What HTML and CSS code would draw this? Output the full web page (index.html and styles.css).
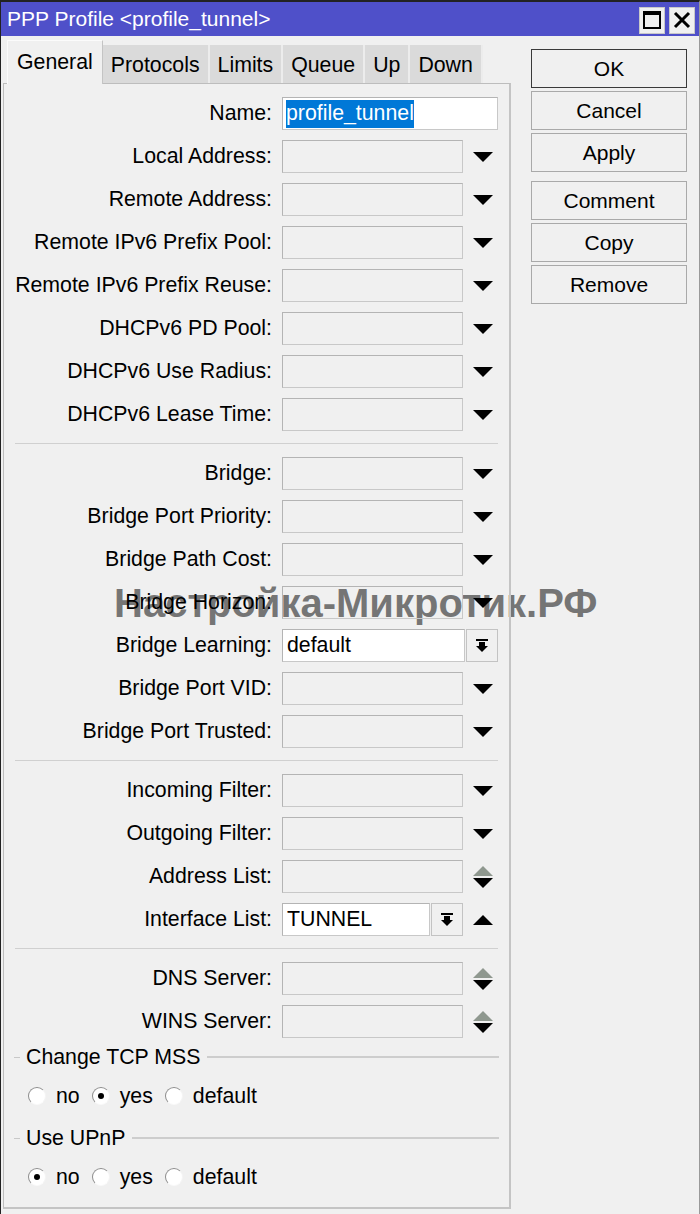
FILE: index.html
```html
<!DOCTYPE html>
<html lang="en">
<head>
  <meta charset="UTF-8">
  <title>PPP Profile &lt;profile_tunnel&gt;</title>
  <link rel="stylesheet" href="styles.css">
</head>
<body>
  <div class="window">
    <div class="titlebar">
      <span class="title">PPP Profile &lt;profile_tunnel&gt;</span>
      <div class="title-btns">
        <span class="tbtn"><svg width="20" height="20" viewBox="0 0 20 20"><rect x="2" y="2" width="16" height="16" fill="none" stroke="#000" stroke-width="2"/><rect x="2" y="2" width="16" height="3" fill="#000"/></svg></span>
        <span class="tbtn"><svg width="20" height="20" viewBox="0 0 20 20"><path d="M3 3 L17 17 M17 3 L3 17" stroke="#000" stroke-width="3"/></svg></span>
      </div>
    </div>

    <div class="body">
      <div class="left">
        <div class="tabs">
          <div class="tab active">General</div>
          <div class="tab">Protocols</div>
          <div class="tab">Limits</div>
          <div class="tab">Queue</div>
          <div class="tab">Up</div>
          <div class="tab">Down</div>
        </div>

        <div class="panel">
          <div class="grid">
            <label>Name:</label>
            <div class="field wide white"><span class="sel">profile_tunnel</span></div>

            <label>Local Address:</label>
            <div class="field"></div>
            <span class="arrow down"></span>

            <label>Remote Address:</label>
            <div class="field"></div>
            <span class="arrow down"></span>

            <label>Remote IPv6 Prefix Pool:</label>
            <div class="field"></div>
            <span class="arrow down"></span>

            <label>Remote IPv6 Prefix Reuse:</label>
            <div class="field"></div>
            <span class="arrow down"></span>

            <label>DHCPv6 PD Pool:</label>
            <div class="field"></div>
            <span class="arrow down"></span>

            <label>DHCPv6 Use Radius:</label>
            <div class="field"></div>
            <span class="arrow down"></span>

            <label>DHCPv6 Lease Time:</label>
            <div class="field"></div>
            <span class="arrow down"></span>
          </div>

          <div class="sep"></div>

          <div class="grid">
            <label>Bridge:</label>
            <div class="field"></div>
            <span class="arrow down"></span>

            <label>Bridge Port Priority:</label>
            <div class="field"></div>
            <span class="arrow down"></span>

            <label>Bridge Path Cost:</label>
            <div class="field"></div>
            <span class="arrow down"></span>

            <label>Bridge Horizon:</label>
            <div class="field"></div>
            <span class="arrow down"></span>

            <label>Bridge Learning:</label>
            <div class="combo wide">
              <div class="field white">default</div>
              <span class="drop"><span class="drop-icon"></span></span>
            </div>

            <label>Bridge Port VID:</label>
            <div class="field"></div>
            <span class="arrow down"></span>

            <label>Bridge Port Trusted:</label>
            <div class="field"></div>
            <span class="arrow down"></span>
          </div>

          <div class="sep"></div>

          <div class="grid">
            <label>Incoming Filter:</label>
            <div class="field"></div>
            <span class="arrow down"></span>

            <label>Outgoing Filter:</label>
            <div class="field"></div>
            <span class="arrow down"></span>

            <label>Address List:</label>
            <div class="field"></div>
            <span class="arrow updown"></span>

            <label>Interface List:</label>
            <div class="combo">
              <div class="field white">TUNNEL</div>
              <span class="drop"><span class="drop-icon"></span></span>
            </div>
            <span class="arrow up"></span>
          </div>

          <div class="sep"></div>

          <div class="grid">
            <label>DNS Server:</label>
            <div class="field"></div>
            <span class="arrow updown"></span>

            <label>WINS Server:</label>
            <div class="field"></div>
            <span class="arrow updown"></span>
          </div>

          <div class="group">
            <span class="group-lead"></span>
            <span class="group-title">Change TCP MSS</span>
            <span class="group-line"></span>
          </div>
          <div class="radios">
            <span class="radio"></span><span class="rlabel">no</span>
            <span class="radio checked"></span><span class="rlabel">yes</span>
            <span class="radio"></span><span class="rlabel">default</span>
          </div>

          <div class="group">
            <span class="group-lead"></span>
            <span class="group-title">Use UPnP</span>
            <span class="group-line"></span>
          </div>
          <div class="radios">
            <span class="radio checked"></span><span class="rlabel">no</span>
            <span class="radio"></span><span class="rlabel">yes</span>
            <span class="radio"></span><span class="rlabel">default</span>
          </div>
        </div>
      </div>

      <div class="actions">
        <button class="default">OK</button>
        <button>Cancel</button>
        <button>Apply</button>
        <button class="spaced">Comment</button>
        <button>Copy</button>
        <button>Remove</button>
      </div>
    </div>

    <div class="watermark">Настройка-Микротик.РФ</div>
  </div>
</body>
</html>
```

FILE: styles.css
```css
body {
  margin: 0;
  font-family: "Liberation Sans", Arial, sans-serif;
  font-size: 21.3px;
  color: #000;
  background: #f0f0f0;
}
.window {
  position: relative;
  width: 700px;
  height: 1214px;
  box-sizing: border-box;
  border-top: 2px solid #222;
  border-left: 1px solid #222;
  border-right: 1px solid #9a9a9a;
  background: #f0f0f0;
  overflow: hidden;
}
.titlebar {
  height: 34px;
  background: #4f50c9;
  display: flex;
  align-items: center;
  justify-content: space-between;
  padding: 0 4px 0 6px;
}
.title {
  color: #fff;
  font-size: 21px;
}
.title-btns {
  display: flex;
  gap: 4px;
  align-items: center;
  margin-top: 2px;
}
.tbtn {
  width: 26px;
  height: 27px;
  box-sizing: border-box;
  background: #f0f0f0;
  border: 1px solid #c8c8c8;
  display: flex;
  align-items: center;
  justify-content: center;
}
.body {
  display: flex;
}
.left {
  margin-left: 2px;
  width: 508px;
}
.tabs {
  display: flex;
  align-items: flex-end;
  height: 47px;
  padding-left: 4px;
}
.tab {
  height: 38px;
  box-sizing: border-box;
  padding: 7px 8px 0;
  background: #dadada;
  border-right: 2px solid #ececec;
  line-height: 26px;
}
.tab.active {
  height: 44px;
  padding: 8px 9px 0;
  background: #f0f0f0;
  border: 1px solid #c4c4c4;
  border-bottom: none;
  border-top-color: #fbfbfb;
  border-left-color: #fbfbfb;
  margin-bottom: -1px;
  position: relative;
  z-index: 2;
}
.panel {
  position: relative;
  z-index: 1;
  height: 1126px;
  box-sizing: border-box;
  border: 1px solid #bdbdbd;
  border-right: 2px solid #c4c4c4;
  border-bottom: 2px solid #c4c4c4;
  padding-top: 13px;
}
.grid {
  display: grid;
  grid-template-columns: 268px 181px 20px;
  column-gap: 10px;
  row-gap: 10px;
  grid-auto-rows: 33px;
  align-items: center;
}
.grid > .wide {
  grid-column: 2 / span 2;
  width: 216px;
}
.grid label {
  text-align: right;
  white-space: nowrap;
}
.field {
  height: 33px;
  box-sizing: border-box;
  border: 1px solid #b4b4b4;
  border-right-color: #c8c8c8;
  border-bottom-color: #c8c8c8;
  background: transparent;
  padding: 0 4px;
  line-height: 31px;
  white-space: nowrap;
  overflow: hidden;
}
.field.white {
  background: #fff;
}
.field.wide {
  padding-left: 3px;
}
.sel {
  background: #0078d7;
  color: #fff;
  padding: 1px 0 3px;
}
.combo {
  display: flex;
  gap: 1px;
  width: 181px;
}
.combo .field {
  flex: 1;
}
.drop {
  width: 32px;
  height: 33px;
  box-sizing: border-box;
  border: 1px solid #c3c3c3;
  background: #f0f0f0;
  display: flex;
  align-items: center;
  justify-content: center;
}
.drop-icon {
  position: relative;
  width: 12px;
  height: 13px;
  border-top: 2px solid #000;
  box-sizing: border-box;
}
.drop-icon::before {
  content: "";
  position: absolute;
  left: 3px;
  top: 1px;
  width: 6px;
  height: 4px;
  background: #000;
}
.drop-icon::after {
  content: "";
  position: absolute;
  left: 0;
  top: 5px;
  border-left: 6px solid transparent;
  border-right: 6px solid transparent;
  border-top: 6px solid #000;
}
.arrow {
  justify-self: center;
  width: 20px;
  display: flex;
  flex-direction: column;
  align-items: center;
}
.arrow.down::before {
  content: "";
  border-left: 10px solid transparent;
  border-right: 10px solid transparent;
  border-top: 10px solid #000;
}
.arrow.up::before {
  content: "";
  border-left: 10px solid transparent;
  border-right: 10px solid transparent;
  border-bottom: 10px solid #000;
}
.arrow.updown::before {
  content: "";
  border-left: 10px solid transparent;
  border-right: 10px solid transparent;
  border-bottom: 10px solid #8f988f;
}
.arrow.updown::after {
  content: "";
  border-left: 10px solid transparent;
  border-right: 10px solid transparent;
  border-top: 10px solid #000;
  margin-top: 2px;
}
.sep {
  margin: 12px 11px 13px 11px;
  height: 1px;
  background: #d0d0d0;
}
.group {
  display: flex;
  align-items: center;
  margin: 8px 10px 0 10px;
  height: 22px;
}
.group-lead {
  width: 6px;
  height: 1px;
  background: #c8c8c8;
  margin-right: 6px;
}
.group-title {
  padding-right: 7px;
}
.group-line {
  flex: 1;
  height: 2px;
  background: #cdcdcd;
}
.radios {
  display: flex;
  align-items: center;
  height: 22px;
  margin: 17px 0 0 24px;
}
.radio {
  position: relative;
  width: 18px;
  height: 18px;
  box-sizing: border-box;
  border-radius: 50%;
  background: #fff;
  border: 1px solid;
  border-color: #8c8c8c #f4f4f4 #fafafa #8c8c8c;
  margin-right: 10px;
}
.radio.checked::after {
  content: "";
  position: absolute;
  left: 5px;
  top: 5px;
  width: 6px;
  height: 6px;
  border-radius: 50%;
  background: #000;
}
.rlabel {
  margin-right: 12px;
}
.radios + .group {
  margin-top: 20px;
}
.actions {
  display: flex;
  flex-direction: column;
  gap: 3px;
  margin-left: 20px;
  padding-top: 13px;
  width: 156px;
}
.actions button {
  height: 39px;
  font-family: inherit;
  font-size: 21px;
  background: #f0f0f0;
  border: 1px solid #a9a9a9;
  color: #000;
  padding: 0;
}
.actions button.default {
  border-color: #3a3a3a;
}
.actions button.spaced {
  margin-top: 6px;
}
.watermark {
  position: absolute;
  left: 113px;
  top: 579px;
  z-index: 0;
  font-size: 40px;
  font-weight: bold;
  color: rgba(95, 95, 95, 0.85);
  white-space: nowrap;
}
```
